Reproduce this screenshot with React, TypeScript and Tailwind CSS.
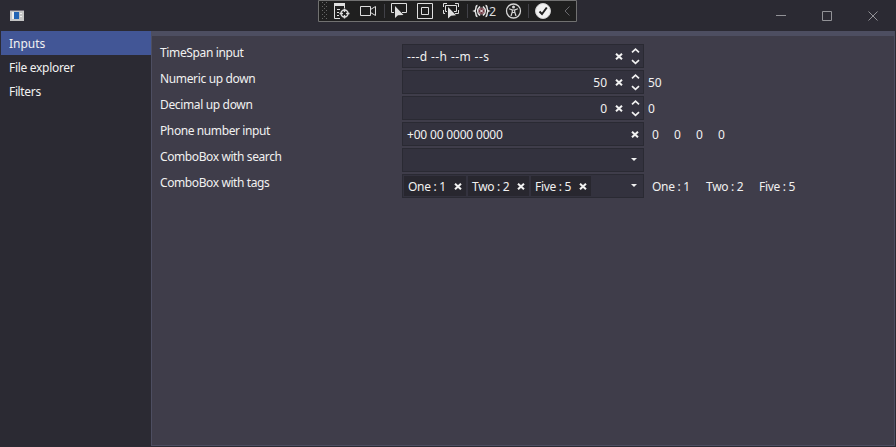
import type { ReactNode } from "react";

const Clear = ({ className = "" }: { className?: string }) => (
  <svg className={`block h-[7px] w-2 shrink-0 ${className}`} viewBox="0 0 8 7">
    <path d="M1 .7 7 6.3M7 .7 1 6.3" stroke="#f1f1f1" strokeWidth="2" fill="none" />
  </svg>
);

const Spinner = () => (
  <svg className="block h-[18px] w-[9px] shrink-0" viewBox="0 0 9 18">
    <path d="M1 5.3 4.5 2.1 8 5.3M1 13.2 4.5 16.4 8 13.2" stroke="#f1f1f1" strokeWidth="1.7" fill="none" />
  </svg>
);

const Caret = () => (
  <svg className="mr-[6px] mb-px block h-[3px] w-[6px] shrink-0" viewBox="0 0 6 3">
    <path d="M0 0H6L3 3Z" fill="#f1f1f1" />
  </svg>
);

const Box = ({ children, className = "" }: { children?: ReactNode; className?: string }) => (
  <div className={`flex h-6 w-[242px] shrink-0 items-center border border-[#2a2a33] bg-[#33323e] ${className}`}>{children}</div>
);

const Row = ({ label, spacing, children }: { label: string; spacing: string; children: ReactNode }) => (
  <div className="flex h-[26px]">
    <div className={`w-[242px] shrink-0 pt-px ${spacing}`}>{label}</div>
    <div className="flex h-6 items-center">{children}</div>
  </div>
);

const Tag = ({ text, className }: { text: string; className: string }) => (
  <div className={`flex h-5 shrink-0 items-center justify-between bg-[#28272f] pr-1 pl-1 ${className}`}>
    <span className="pt-0.5 tracking-[-0.3px]">{text}</span>
    <Clear />
  </div>
);

const Toolbar = () => (
  <svg className="absolute top-0 left-[318px] block h-[22px] w-[259px]" viewBox="0 0 259 22" fill="none">
    <path d="M.5 .5H258.5V21.5H.5Z" fill="#1f1f1f" stroke="#717171" />
    <g fill="#666">
      {[2, 6, 10, 14, 18].map((y) => (
        <g key={y}>
          <path d={`M4 ${y}h1v1h-1zM8 ${y}h1v1h-1z`} />
          {y < 18 && <path d={`M6 ${y + 2}h1v1h-1z`} />}
        </g>
      ))}
    </g>
    <g stroke="#dedede">
      <path d="M16.5 6V18.5H22M26.5 6V8M19 9.5H22M19 12.5H21M19 15.5H21" />
      <path d="M16 3H27V6H16Z" fill="#dedede" stroke="none" />
      <circle cx="26.5" cy="13.5" r="3.5" strokeWidth="1.4" />
      <path d="M26.5 8.5V12M26.5 15V18.5M21.5 13.5H25M28 13.5H31.5" strokeWidth="1.4" />
      <path d="M42.5 6.5H52.5V15.5H42.5ZM52.5 9.5 57.5 6.5V15.5L52.5 12.5" />
      <path d="M76 12.5H73.5V3.5H88.5V12.5H84" />
      <path d="M77 6V18L80 15.2L85.5 15Z" fill="#dedede" stroke="none" />
      <path d="M99.5 3.5H114.5V18.5H99.5ZM103.5 7.5H110.5V14.5H103.5Z" />
      <path d="M125.5 7V3.5H129M137 3.5H140.5V7M140.5 10V13.5H137M127 13.5H125.5V10M129 11.5H127.5V5.5H138.5V11.5H136" />
      <path d="M130 7V18.5L133 15.7L138 15.3Z" fill="#dedede" stroke="none" />
    </g>
    <path d="M66.5 4V18M149.5 4V18M210.5 4V18" stroke="#414147" />
    <g stroke="#e8e8e8" strokeWidth="1.4">
      <path d="M159.5 5.5C156.7 5.5 159 10.2 156.5 11C159 11.8 156.7 16.5 159.5 16.5M167.5 5.5C170.3 5.5 168 10.2 170.5 11C168 11.8 170.3 16.5 167.5 16.5" />
      <path d="M162 6.5Q157.5 11 162 15.5M165 6.5Q169.5 11 165 15.5" strokeWidth="1.6" />
    </g>
    <circle cx="163.5" cy="11" r="3.2" fill="#6e3540" stroke="#b5a7aa" strokeWidth=".5" />
    <path d="m162 9.5 3 3m0-3-3 3" stroke="#fff" />
    <text x="171" y="16" fill="#ddd" fontSize="12.5" fontFamily="Noto Sans, sans-serif">2</text>
    <circle cx="195.5" cy="11" r="7" stroke="#d5d5d5" strokeWidth="1.3" />
    <circle cx="195.5" cy="7" r="1.5" fill="#d5d5d5" />
    <path d="M191 8.7 194.3 10V12L193 16M200 8.7 196.7 10V12L198 16M194 10H197M194.2 12.5H196.8" stroke="#d5d5d5" strokeWidth="1.2" />
    <circle cx="225" cy="11" r="7.5" fill="#f1f1f1" stroke="#d0d0d0" />
    <path d="M221.5 11.5 224 14 228.8 7.5" stroke="#202020" strokeWidth="2" />
    <path d="M251.5 6.5 247 11 251.5 15.5" stroke="#69696d" />
  </svg>
);

export default function App() {
  return (
    <div className="relative flex h-[447px] w-[896px] flex-col overflow-hidden bg-[#2b2a33] font-['Noto_Sans',sans-serif] text-[12px] leading-4 text-[#f1f1f1]">
      <header className="flex h-[31px] shrink-0 items-center justify-between pr-[18px] pl-[10px]">
        <svg className="block h-[11px] w-[14px]" viewBox="0 0 14 11">
          <path d="M0 0H14V11H0Z" fill="#c4c4c4" />
          <path d="M0 0H14V1H0Z" fill="#716c78" />
          <path d="M2 2H4V9H2Z" fill="#eee" />
          <path d="M4 2H9V9H4Z" fill="#2464b4" />
          <path d="M10 3h2v1h-2zM10 6h2v1h-2z" fill="#eee" />
        </svg>
        <svg className="block h-[11px] w-[102px]" viewBox="0 0 102 11" fill="none" stroke="#929297">
          <path d="M0 5.5H10M46.5 1.5H55.5V10.5H46.5Z" />
          <path d="M92.5 1.5 101.5 10.5M101.5 1.5 92.5 10.5" />
        </svg>
      </header>
      <Toolbar />
      <div className="flex h-[415px] pr-px pl-px">
        <nav className="w-[150px] shrink-0">
          <div className="flex h-6 items-center bg-[#425696] pt-0.5 pl-2">Inputs</div>
          <div className="flex h-6 items-center pt-0.5 pl-2 tracking-[-0.3px]">File explorer</div>
          <div className="flex h-6 items-center pt-0.5 pl-2 tracking-[-0.35px]">Filters</div>
        </nav>
        <main className="flex-1 border border-t-[5px] border-[#4d4e61] bg-[#3f3d4a] pt-2 pl-2">
          <Row label="TimeSpan input" spacing="tracking-[-0.36px]">
            <Box className="pr-[3px] pl-1">
              <span className="flex-1 pt-0.5 tracking-[0.4px]">---d --h --m --s</span><Clear className="mr-2" /><Spinner />
            </Box>
          </Row>
          <Row label="Numeric up down" spacing="tracking-[-0.35px]">
            <Box className="pr-[3px]">
              <span className="flex-1 pt-0.5 pr-2 text-right">50</span><Clear className="mr-2" /><Spinner />
            </Box>
            <span className="ml-1 pt-0.5">50</span>
          </Row>
          <Row label="Decimal up down" spacing="tracking-[-0.35px]">
            <Box className="pr-[3px]">
              <span className="flex-1 pt-0.5 pr-2 text-right">0</span><Clear className="mr-2" /><Spinner />
            </Box>
            <span className="ml-1 pt-0.5">0</span>
          </Row>
          <Row label="Phone number input" spacing="tracking-[-0.4px]">
            <Box className="pr-1 pl-1"><span className="flex-1 pt-0.5 tracking-[-0.18px]">+00 00 0000 0000</span><Clear /></Box>
            <div className="ml-2 flex pt-0.5">
              <span className="w-[22px]">0</span><span className="w-[22px]">0</span><span className="w-[22px]">0</span><span>0</span>
            </div>
          </Row>
          <Row label="ComboBox with search" spacing="tracking-[-0.4px]">
            <Box className="justify-end"><Caret /></Box>
          </Row>
          <Row label="ComboBox with tags" spacing="tracking-[-0.4px]">
            <Box className="pl-px">
              <div className="flex flex-1 gap-[2px]">
                <Tag text="One : 1" className="w-[62px]" />
                <Tag text="Two : 2" className="w-[61px]" />
                <Tag text="Five : 5" className="w-[60px]" />
              </div>
              <Caret />
            </Box>
            <div className="ml-2 flex pt-0.5 tracking-[-0.3px] whitespace-nowrap">
              <span className="w-[54px]">One : 1</span><span className="w-[53px]">Two : 2</span><span>Five : 5</span>
            </div>
          </Row>
        </main>
      </div>
    </div>
  );
}
